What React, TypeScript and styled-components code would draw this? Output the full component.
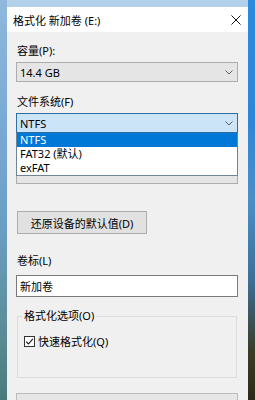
import React from "react";
import styled, { createGlobalStyle } from "styled-components";

const GlobalStyle = createGlobalStyle`
  html, body {
    margin: 0;
    padding: 0;
  }
  body {
    width: 255px;
    height: 400px;
    overflow: hidden;
    font-family: "Noto Sans", "Noto Sans CJK SC", sans-serif;
    color: #000;
  }
`;

const Desktop = styled.div`
  width: 255px;
  height: 400px;
  overflow: hidden;
  box-sizing: border-box;
  padding: 7px 7px 0 7px;
  display: flex;
  background:
    linear-gradient(180deg, #8fb8dc 0%, #7aaad4 30%, #6b9fc6 55%, #5d8f9c 80%, #4a7b7b 100%) left top / 7px 100% no-repeat,
    linear-gradient(180deg, #2b8be0 0%, #2e86d8 30%, #4a8fc8 50%, #3d6f97 70%, #3b3b26 88%, #2e2a1b 100%) right top / 7px 100% no-repeat,
    #b3d0ea;
`;

const Dialog = styled.div`
  width: 241px;
  background: #f0f0f0;
  display: flex;
  flex-direction: column;
`;

const TitleBar = styled.div`
  height: 25px;
  flex-shrink: 0;
  background: #fff;
  display: flex;
  align-items: center;
  justify-content: space-between;
  padding: 0 7px 0 6px;
  font-size: 11px;
`;

const Body = styled.div`
  padding: 11px 10px 0 9px;
  display: flex;
  flex-direction: column;
`;

const Section = styled.div<{ $top?: number }>`
  margin-top: ${(p) => p.$top ?? 0}px;
  display: flex;
  flex-direction: column;
`;

const Label = styled.div<{ $after?: number }>`
  font-size: 11px;
  line-height: 16px;
  min-height: 16px;
  padding-left: 1px;
  margin-bottom: ${(p) => p.$after ?? 3}px;
`;

const Combo = styled.div<{ $open?: boolean }>`
  position: relative;
  height: 20px;
  box-sizing: border-box;
  border: 1px solid ${(p) => (p.$open ? "#2f6fa3" : "#adadad")};
  background: ${(p) => (p.$open ? "#cce4f7" : "#e5e5e5")};
  display: flex;
  align-items: center;
  justify-content: space-between;
  padding: 0 4px 0 3px;
  font-size: 11px;
`;

const List = styled.div`
  position: absolute;
  top: calc(100% + 1px);
  left: -1px;
  right: -1px;
  z-index: 2;
  background: #fff;
  border: 1px solid #6f8497;
  border-top: 0;
`;

const Option = styled.div<{ $selected?: boolean }>`
  height: 14px;
  line-height: 14px;
  padding-left: 3px;
  font-size: 11px;
  background: ${(p) => (p.$selected ? "#0078d7" : "transparent")};
  color: ${(p) => (p.$selected ? "#fff" : "#000")};
`;

const Button = styled.div`
  margin-top: 27px;
  width: 130px;
  height: 23px;
  box-sizing: border-box;
  margin-left: 1px;
  background: #e1e1e1;
  border: 1px solid #adadad;
  display: flex;
  align-items: center;
  justify-content: center;
  font-size: 11px;
`;

const TextBox = styled.div`
  height: 22px;
  box-sizing: border-box;
  border: 1px solid #7a7a7a;
  background: #fff;
  display: flex;
  align-items: center;
  padding-left: 3px;
  font-size: 11px;
`;

const Group = styled.fieldset`
  margin: 11px 1px 0 1px;
  height: 70px;
  box-sizing: border-box;
  padding: 0 4px;
  border: 1px solid #dcdcdc;
  min-width: 0;
`;

const Legend = styled.legend`
  padding: 0 2px;
  font-size: 11px;
  line-height: 16px;
`;

const CheckRow = styled.div`
  margin-top: 12px;
  margin-left: 2px;
  display: flex;
  align-items: center;
  gap: 3px;
  font-size: 11px;
  line-height: 11px;
`;

const Progress = styled.div`
  margin-top: 15px;
  height: 20px;
  box-sizing: border-box;
  border: 1px solid #bcbcbc;
  background: #e6e6e6;
`;

const Chevron = () => (
  <svg width="8" height="5" viewBox="0 0 8 5">
    <polyline points="0.5,0.5 4,4 7.5,0.5" fill="none" stroke="#606060" strokeWidth="1" />
  </svg>
);

const CloseIcon = () => (
  <svg width="10" height="10" viewBox="0 0 10 10">
    <path d="M0.5 0.5 L9.5 9.5 M9.5 0.5 L0.5 9.5" stroke="#111" strokeWidth="1" />
  </svg>
);

const CheckBox = () => (
  <svg width="11" height="11" viewBox="0 0 11 11">
    <rect x="0.5" y="0.5" width="10" height="10" fill="#fff" stroke="#333" />
    <polyline points="2.2,5.6 4.5,8 8.8,2.8" fill="none" stroke="#111" strokeWidth="1.1" />
  </svg>
);

export default function App() {
  return (
    <>
      <GlobalStyle />
      <Desktop>
        <Dialog>
          <TitleBar>
            <span>格式化 新加卷 (E:)</span>
            <CloseIcon />
          </TitleBar>
          <Body>
            <Section>
              <Label>容量(P):</Label>
              <Combo>
                <span>14.4 GB</span>
                <Chevron />
              </Combo>
            </Section>

            <Section $top={12}>
              <Label>文件系统(F)</Label>
              <Combo $open>
                <span>NTFS</span>
                <Chevron />
                <List>
                  <Option $selected>NTFS</Option>
                  <Option>FAT32 (默认)</Option>
                  <Option>exFAT</Option>
                </List>
              </Combo>
            </Section>

            {/* allocation unit row, covered by the open list */}
            <Section $top={12}>
              <Label />
              <Combo />
            </Section>

            <Button>还原设备的默认值(D)</Button>

            <Section $top={19}>
              <Label $after={6}>卷标(L)</Label>
              <TextBox>新加卷</TextBox>
            </Section>

            <Group>
              <Legend>格式化选项(O)</Legend>
              <CheckRow>
                <CheckBox />
                <span>快速格式化(Q)</span>
              </CheckRow>
            </Group>

            <Progress />
          </Body>
        </Dialog>
      </Desktop>
    </>
  );
}
